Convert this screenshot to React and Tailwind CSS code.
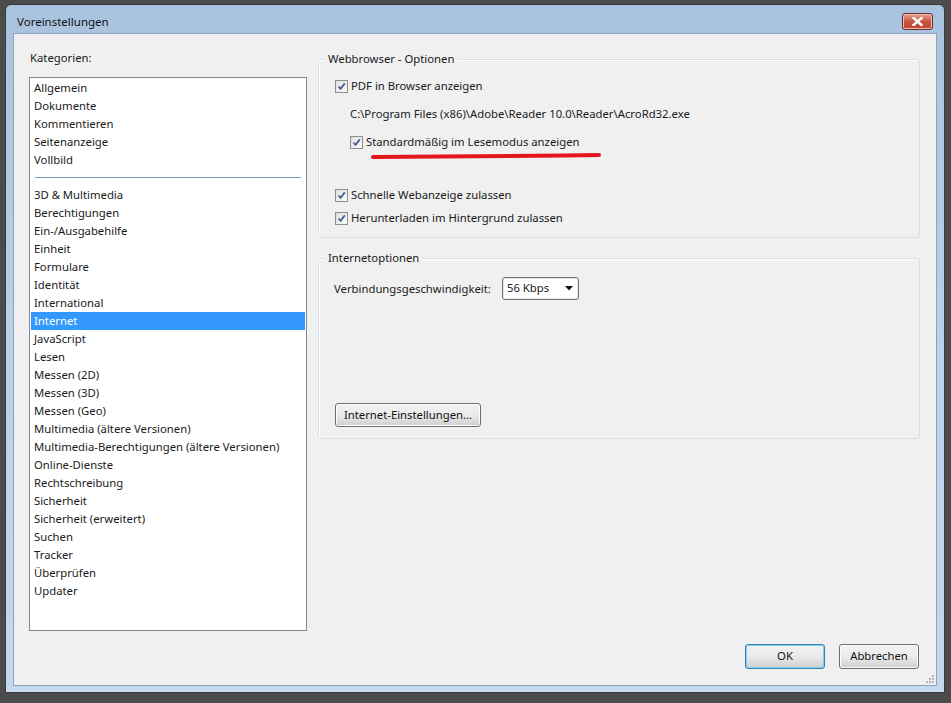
import React from 'react';

const topItems = ['Allgemein', 'Dokumente', 'Kommentieren', 'Seitenanzeige', 'Vollbild'];

const bottomItems = [
  '3D & Multimedia',
  'Berechtigungen',
  'Ein-/Ausgabehilfe',
  'Einheit',
  'Formulare',
  'Identität',
  'International',
  'Internet',
  'JavaScript',
  'Lesen',
  'Messen (2D)',
  'Messen (3D)',
  'Messen (Geo)',
  'Multimedia (ältere Versionen)',
  'Multimedia-Berechtigungen (ältere Versionen)',
  'Online-Dienste',
  'Rechtschreibung',
  'Sicherheit',
  'Sicherheit (erweitert)',
  'Suchen',
  'Tracker',
  'Überprüfen',
  'Updater',
];

const Checkbox = () => (
  <span className="flex h-[13px] w-[13px] shrink-0 items-center justify-center border border-[#8e8f8f] bg-gradient-to-br from-[#dcdcdc] to-[#fbfbfb]">
    <span className="flex h-[9px] w-[9px] items-center justify-center bg-gradient-to-br from-[#e6e6e6] to-[#f8f8f8]">
      <svg width="9" height="9" viewBox="0 0 9 9">
        <path d="M1.5 4.5 L3.6 6.8 L7.8 1.4" fill="none" stroke="#4a5e96" strokeWidth="1.8" />
      </svg>
    </span>
  </span>
);

const CheckRow = ({ label, className = '' }) => (
  <div className={`flex h-[18px] items-center gap-[3px] ${className}`}>
    <Checkbox />
    <span>{label}</span>
  </div>
);

const GroupBox = ({ title, className = '', children }) => (
  <div className={`relative rounded-[3px] border border-[#d5dfe5] shadow-[inset_1px_1px_0_#ffffff] ${className}`}>
    <span className="absolute left-[6px] top-[-9px] bg-[#f0f0f0] px-[3px] leading-[16px]">{title}</span>
    {children}
  </div>
);

const Button = ({ children, primary, className = '' }) => (
  <button
    className={`flex items-center justify-center rounded-[3px] border bg-gradient-to-b from-[#f2f2f2] via-[#ebebeb] to-[#cfcfcf] text-[#111] ${
      primary ? 'border-[#3c7fb1] shadow-[inset_0_0_0_1px_#7ed0f0]' : 'border-[#707070] shadow-[inset_0_0_0_1px_#fcfcfc]'
    } ${className}`}
  >
    {children}
  </button>
);

export default function App() {
  return (
    <div
      className="h-[703px] w-[951px] overflow-hidden bg-[#4b4b4b] pl-[5px] pt-[4px] text-[11.3px] text-[#1a1a1a]"
      style={{ fontFamily: '"Noto Sans", "DejaVu Sans", sans-serif' }}
    >
      <div className="flex h-[689px] w-[940px] flex-col rounded-t-[6px] border border-[#3a3a3a] bg-gradient-to-b from-[#a9c3de] via-[#b9d1ea] to-[#c4d8ee] px-[7px] pb-[6px]">
        {/* title bar */}
        <div className="flex h-[28px] shrink-0 items-center justify-between pl-[4px] pr-[4px]">
          <span className="pt-[6px] text-[11.5px] text-[#111]">Voreinstellungen</span>
          <div className="mt-[4px] flex h-[17px] w-[31px] items-center justify-center rounded-[3px] border border-[#6b2b23] bg-gradient-to-b from-[#e4a598] via-[#c8553f] to-[#c24530] shadow-[inset_0_0_0_1px_#eec0b5]">
            <svg width="11" height="9" viewBox="0 0 11 9">
              <path d="M1.5 1 L9.5 8 M9.5 1 L1.5 8" stroke="#ffffff" strokeWidth="2.4" strokeLinecap="square" />
            </svg>
          </div>
        </div>

        {/* client area */}
        <div className="relative flex flex-1 flex-col border border-[#8da2bc] bg-[#f0f0f0] pl-[15px] pr-[16px] pt-[16px]">
          <div className="flex">
            {/* left column */}
            <div className="flex w-[278px] flex-col">
              <div className="pl-[1px] leading-[16px]">Kategorien:</div>
              <div className="mt-[11px] h-[554px] border border-[#828790] bg-white px-[1px] pt-[1px]">
                {topItems.map((item) => (
                  <div key={item} className="h-[18px] pl-[3px] leading-[18px]">
                    {item}
                  </div>
                ))}
                <div className="flex h-[17px] items-center px-[4px]">
                  <div className="h-px w-full bg-[#6e9cc4]" />
                </div>
                {bottomItems.map((item) => (
                  <div
                    key={item}
                    className={`h-[18px] pl-[3px] leading-[18px] ${item === 'Internet' ? 'bg-[#3399ff] text-white' : ''}`}
                  >
                    {item}
                  </div>
                ))}
              </div>
            </div>

            {/* right column */}
            <div className="ml-[11px] flex flex-1 flex-col pt-[9px]">
              <GroupBox title="Webbrowser - Optionen" className="h-[179px] pl-[16px] pt-[17px]">
                <CheckRow label="PDF in Browser anzeigen" />
                <div className="mt-[10px] h-[18px] pl-[15px] leading-[18px]">
                  C:\Program Files (x86)\Adobe\Reader 10.0\Reader\AcroRd32.exe
                </div>
                <div className="relative mt-[10px]">
                  <CheckRow label="Standardmäßig im Lesemodus anzeigen" className="pl-[15px]" />
                  <svg className="absolute left-[36px] top-[18px]" width="232" height="10" viewBox="0 0 232 10">
                    <path
                      d="M2 6 C 70 5.6, 150 5.2, 228 4"
                      fill="none"
                      stroke="#e3151d"
                      strokeWidth="4"
                      strokeLinecap="round"
                    />
                  </svg>
                </div>
                <CheckRow label="Schnelle Webanzeige zulassen" className="mt-[35px]" />
                <CheckRow label="Herunterladen im Hintergrund zulassen" className="mt-[5px]" />
              </GroupBox>

              <GroupBox title="Internetoptionen" className="mt-[20px] h-[181px] pl-[15px] pt-[18px]">
                <div className="flex items-center">
                  <span className="w-[168px] leading-[23px]">Verbindungsgeschwindigkeit:</span>
                  <div className="flex h-[23px] w-[77px] items-center justify-between rounded-[3px] border border-[#707070] bg-white pl-[4px] pr-[5px] shadow-[inset_0_0_0_1px_#e8e8e8]">
                    <span>56 Kbps</span>
                    <svg width="8" height="5" viewBox="0 0 8 5">
                      <path d="M0 0 H8 L4 4.5 Z" fill="#111111" />
                    </svg>
                  </div>
                </div>
                <Button className="mt-[103px] h-[24px] w-[146px] ml-[1px]">Internet-Einstellungen...</Button>
              </GroupBox>
            </div>
          </div>

          {/* dialog buttons */}
          <div className="mt-[13px] flex justify-end gap-[14px] pr-[1px]">
            <Button primary className="h-[25px] w-[80px]">OK</Button>
            <Button className="h-[25px] w-[80px]">Abbrechen</Button>
          </div>

          {/* size grip */}
          <svg className="absolute bottom-[2px] right-[2px]" width="10" height="10" viewBox="0 0 10 10">
            <g fill="#b5b5b5">
              <rect x="8" y="2" width="2" height="2" />
              <rect x="5" y="5" width="2" height="2" />
              <rect x="8" y="5" width="2" height="2" />
              <rect x="2" y="8" width="2" height="2" />
              <rect x="5" y="8" width="2" height="2" />
              <rect x="8" y="8" width="2" height="2" />
            </g>
          </svg>
        </div>
      </div>
    </div>
  );
}
